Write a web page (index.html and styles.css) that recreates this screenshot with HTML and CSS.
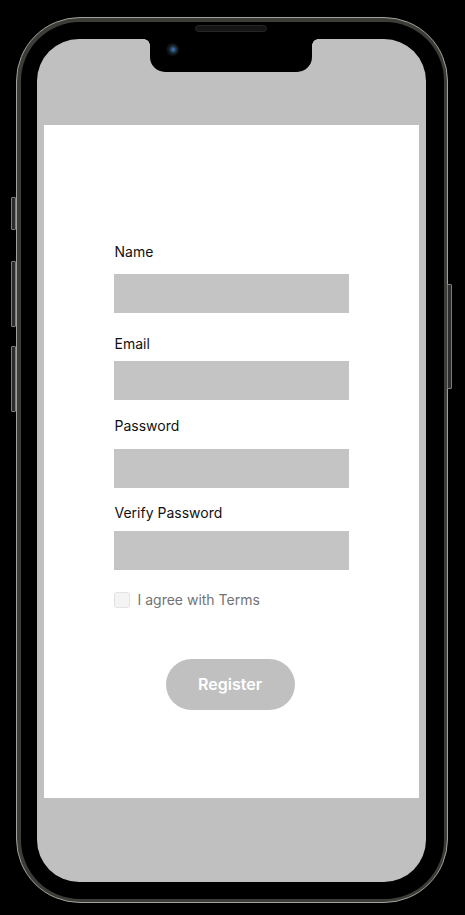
FILE: index.html
```html
<!DOCTYPE html>
<html lang="en">
<head>
<meta charset="utf-8">
<title>Register</title>
<link rel="stylesheet" href="styles.css">
</head>
<body>
<div class="phone">
  <span class="side-btn side-btn--mute"></span>
  <span class="side-btn side-btn--vol-up"></span>
  <span class="side-btn side-btn--vol-down"></span>
  <span class="side-btn side-btn--power"></span>
  <div class="bezel">
    <div class="screen">
      <div class="notch">
        <span class="speaker"></span>
        <span class="camera"></span>
      </div>
      <main class="content">
        <form class="form">
          <label class="label label--first">Name</label>
          <div class="input"></div>
          <label class="label label--close">Email</label>
          <div class="input"></div>
          <label class="label">Password</label>
          <div class="input"></div>
          <label class="label label--close">Verify Password</label>
          <div class="input"></div>
          <div class="agree">
            <span class="checkbox"></span>
            <span class="agree-text">I agree with Terms</span>
          </div>
          <button type="button" class="register">Register</button>
        </form>
      </main>
    </div>
  </div>
</div>
</body>
</html>
```
FILE: styles.css
```css
* { box-sizing: border-box; }

html, body {
  margin: 0;
  padding: 0;
  background: #000;
  width: 465px;
  height: 915px;
  overflow: hidden;
}

body {
  font-family: Inter, "Noto Sans", sans-serif;
  padding-top: 17px;
  padding-left: 16px;
}

.phone {
  position: relative;
  width: 432px;
  height: 886px;
  border-radius: 64px;
  border: 1.5px solid #a2a29c;
  background: #3c3c38;
  padding: 3.5px;
}

.side-btn {
  position: absolute;
  width: 5px;
  background: #2c2c2a;
  border: 1px solid #7c7c78;
  border-radius: 1px;
}
.side-btn--mute { left: -6px; top: 179px; height: 33px; }
.side-btn--vol-up { left: -6px; top: 243px; height: 66px; }
.side-btn--vol-down { left: -6px; top: 328px; height: 66px; }
.side-btn--power { right: -5px; top: 266px; height: 105px; }

.bezel {
  width: 100%;
  height: 100%;
  border-radius: 59px;
  background: #000;
  padding: 17px 17px 17px 16px;
}

.screen {
  position: relative;
  width: 389px;
  height: 843px;
  border-radius: 42px;
  background: #c0c0c0;
  padding: 86px 7px 0 7px;
}

.notch {
  position: absolute;
  top: 0;
  left: 113px;
  width: 162px;
  height: 33px;
  background: #000;
  border-radius: 0 0 15px 15px;
}
.notch::before,
.notch::after {
  content: "";
  position: absolute;
  top: 0;
  width: 6px;
  height: 6px;
}
.notch::before {
  left: -6px;
  background: radial-gradient(circle at 0 100%, transparent 5.5px, #000 6px);
}
.notch::after {
  right: -6px;
  background: radial-gradient(circle at 100% 100%, transparent 5.5px, #000 6px);
}

.speaker {
  position: absolute;
  top: -14px;
  left: 45px;
  width: 72px;
  height: 7px;
  border-radius: 4px;
  background: #151515;
  border: 1px solid #262626;
}

.camera {
  position: absolute;
  top: 4px;
  left: 16px;
  width: 13px;
  height: 13px;
  border-radius: 50%;
  background: radial-gradient(circle at 55% 50%, #4a78c0 0, #2a4e78 2px, #163040 3.5px, #121418 5px, #0c0c0e 6.5px);
}

.content {
  width: 375px;
  height: 673px;
  background: #fff;
  padding-top: 118px;
  padding-left: 70px;
}

.form {
  display: flex;
  flex-direction: column;
  align-items: flex-start;
  width: 235px;
}

.label {
  display: block;
  font-size: 14px;
  line-height: 17px;
  color: #111;
  margin: 17px 0 14.5px 1px;
}
.label--first { margin-top: 0; margin-bottom: 14px; }
.label--close { margin-top: 22px; margin-bottom: 9.5px; }
.label--close:last-of-type { margin-top: 16.5px; }

.input {
  width: 235px;
  height: 39px;
  background: #c4c4c4;
}

.agree {
  display: flex;
  align-items: center;
  gap: 8px;
  margin-top: 21px;
}

.checkbox {
  width: 16px;
  height: 16px;
  border-radius: 3px;
  background: #f4f4f4;
  border: 1px solid #e2e2e2;
}

.agree-text {
  font-size: 14px;
  line-height: 18px;
  color: #737373;
}

.register {
  margin: 50px 0 0 52px;
  width: 129px;
  height: 51px;
  border: none;
  border-radius: 26px;
  background: #c0c0c0;
  color: #fff;
  font-family: Inter, "Noto Sans", sans-serif;
  font-size: 16px;
  font-weight: 600;
  padding: 0;
}
```
